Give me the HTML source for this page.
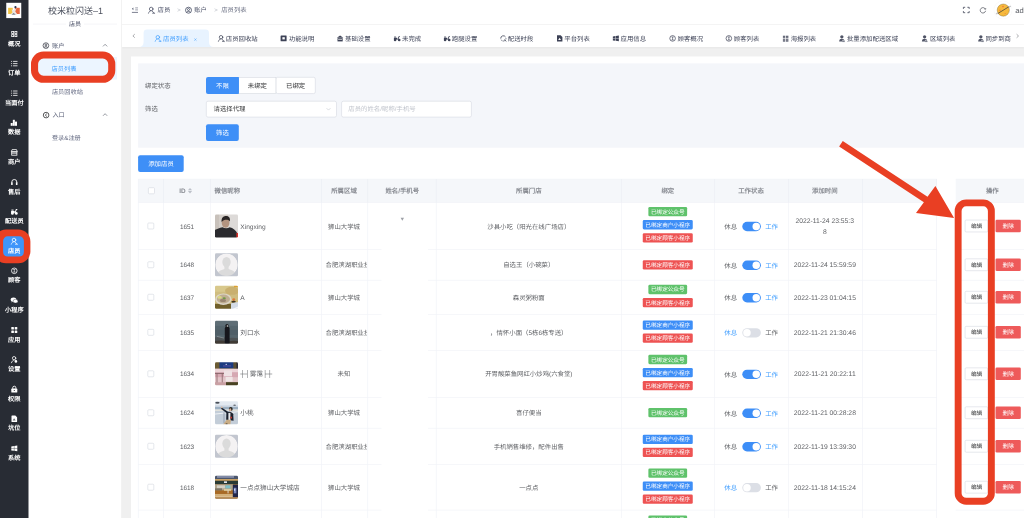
<!DOCTYPE html>
<html lang="zh-CN"><head><meta charset="utf-8"><title>店员列表</title>
<style>
html,body{margin:0;padding:0;}
body{width:1024px;height:518px;overflow:hidden;position:relative;background:#fff;font-family:"Liberation Sans", sans-serif;text-rendering:geometricPrecision;}
.a{position:absolute;}
.t{white-space:nowrap;}
svg{overflow:visible;}
</style></head><body><div id="root" style="position:absolute;left:0;top:0;width:1024px;height:518px;will-change:transform;">
<svg class="a" style="left:121px;top:46px" width="904" height="473"><rect x="1" y="1" width="902.000" height="471.000" fill="#f0f0f0"/></svg>
<svg class="a" style="left:130px;top:55px" width="895" height="465"><rect x="1.0" y="1.5" width="893.000" height="462.000" fill="#fff"/></svg>
<svg class="a" style="left:137px;top:62px" width="889" height="87"><rect x="1.1" y="1.4" width="886.000" height="84.300" fill="#f4f6fa"/></svg>
<div class="a" style="left:122px;top:0px;width:902px;height:25px;background:#fff;border-bottom:1px solid #f4f4f4;box-sizing:border-box;"></div>
<div class="a" style="left:122px;top:25px;width:902px;height:22px;background:#fff;box-shadow:0 1px 2px rgba(0,0,0,0.04);"></div>
<svg class="a" style="left:130px;top:6px;" width="11" height="10"><g transform="translate(1.9 1.2)"><g stroke="#5a6074" fill="none"><path d="M3.3 0.7H6.1M3.3 2.7H6.1" stroke-width="0.6"/><path d="M0 5.2H6.1" stroke-width="0.8"/></g><path d="M1.5 0.2V3L0 1.6Z" fill="#5a6074"/></g></svg>
<svg class="a" style="left:147px;top:5px;" width="10" height="11"><g transform="translate(1 1.7) scale(1.0000 1.0000)"><g stroke="#454b62" stroke-width="0.75" fill="none" stroke-linecap="round"><circle cx="3.2" cy="2.3" r="1.8"/><path d="M0.5 6.5C0.9 5 1.8 4.3 2.6 4.1"/><path d="M3.9 4.1L6.2 6.4"/><path d="M4.6 6.5H6.5"/></g></g></svg>
<div class="a t" style="left:157.5px;top:6px;font-size:6.4px;line-height:10px;color:#454b62;">店员</div>
<div class="a t" style="left:177.2px;top:6px;font-size:6px;line-height:10px;color:#b4b8c0;">&gt;</div>
<svg class="a" style="left:184px;top:5px;" width="10" height="11"><g transform="translate(1 1.7) scale(1.0000 1.0000)"><g stroke="#454b62" stroke-width="0.8" fill="none"><circle cx="3.5" cy="3.5" r="3"/><circle cx="3.5" cy="2.8" r="1"/><path d="M1.6 5.6C2 4.4 5 4.4 5.4 5.6"/></g></g></svg>
<div class="a t" style="left:194.2px;top:6px;font-size:6.4px;line-height:10px;color:#454b62;">账户</div>
<div class="a t" style="left:214.2px;top:6px;font-size:6px;line-height:10px;color:#b4b8c0;">&gt;</div>
<div class="a t" style="left:221.2px;top:6px;font-size:6.4px;line-height:10px;color:#6a6f82;">店员列表</div>
<svg class="a" style="left:962px;top:5px;" width="10" height="11"><g transform="translate(1 1.9)"><g stroke="#3d4256" stroke-width="0.8" fill="none"><path d="M0.4 2V0.4H2.2M4.4 0.4H6.2V2M6.2 4.2V5.8H4.4M2.2 5.8H0.4V4.2"/></g></g></svg>
<svg class="a" style="left:978px;top:6px;" width="10" height="10"><g transform="translate(1.8 1.0)"><g stroke="#4a4d58" stroke-width="0.7" fill="none"><path d="M5.6 2.2A2.7 2.7 0 1 0 5.8 3.8"/><path d="M4.5 2.1L5.8 2.3L6 1" stroke-width="0.55"/></g></g></svg>
<div class="a" style="left:994.4px;top:1.3px;width:17.5px;height:17.5px;background:#fff;border-radius:9px;box-shadow:0 0 1px rgba(0,0,0,0.08);"></div>
<svg class="a" style="left:994px;top:1px;" width="20" height="19"><g transform="translate(1.4 1.5)"><circle cx="7.9" cy="7.6" r="6.1" fill="#f6b93c" stroke="#6e5a28" stroke-width="0.35"/><circle cx="7.6" cy="4.1" r="0.8" fill="#f0743a"/><circle cx="4.6" cy="7.8" r="0.7" fill="#f0743a"/><circle cx="9.8" cy="11" r="0.6" fill="#f0843a"/><path d="M2.6 10.9L13.4 4.3" stroke="#4a4436" stroke-width="0.8" fill="none"/><path d="M2.6 10.9C0.6 12.2 0.4 11.2 1.8 10" stroke="#8a8c92" stroke-width="0.5" fill="none"/><path d="M13.4 4.3C15.4 3 15.6 3.8 14.2 5" stroke="#8a8c92" stroke-width="0.5" fill="none"/></g></svg>
<div class="a t" style="left:1015.2px;top:6px;font-size:7.6px;line-height:10px;color:#55585f;">adm</div>
<svg class="a" style="left:131px;top:32px;" width="7" height="8"><g transform="translate(1.4 1.8)"><path d="M2.4 0.3L0.5 2.1L2.4 3.9" stroke="#73767a" stroke-width="0.6" fill="none"/></g></svg>
<svg class="a" style="left:138px;top:28px;" width="78" height="22"><g transform="translate(1 1.5)"><path d="M0 17.6 C2.6 17.6 4.6 16 4.6 12.6 V3.4 C4.6 1.2 5.8 0 8 0 H66.6 C68.8 0 70 1.2 70 3.4 V12.6 C70 16 72 17.6 74.6 17.6 Z" fill="#e8f3ff"/></g></svg>
<svg class="a" style="left:153px;top:34px;" width="11" height="10"><g transform="translate(1.7 1.0) scale(0.9714 0.9714)"><g stroke="#409eff" stroke-width="0.75" fill="none" stroke-linecap="round"><circle cx="3.2" cy="2.3" r="1.8"/><path d="M0.5 6.5C0.9 5 1.8 4.3 2.6 4.1"/><path d="M3.9 4.1L6.2 6.4"/><path d="M4.6 6.5H6.5"/></g></g></svg>
<div class="a t" style="left:163.0px;top:35px;font-size:6.4px;line-height:10px;color:#409eff;">店员列表</div>
<svg class="a" style="left:216px;top:34px;" width="11" height="10"><g transform="translate(1.95 1.0) scale(0.9714 0.9714)"><g stroke="#3d4256" stroke-width="0.75" fill="none" stroke-linecap="round"><circle cx="3.2" cy="2.3" r="1.8"/><path d="M0.5 6.5C0.9 5 1.8 4.3 2.6 4.1"/><path d="M3.9 4.1L6.2 6.4"/><path d="M4.6 6.5H6.5"/></g></g></svg>
<div class="a t" style="left:225.75px;top:35px;font-size:6.4px;line-height:10px;color:#3d4256;">店员回收站</div>
<svg class="a" style="left:279px;top:34px;" width="10" height="10"><g transform="translate(1.6 1.6)"><rect x="0" y="0" width="6" height="5.6" rx="0.5" fill="#3d4256"/><rect x="1.8" y="1.6" width="2.4" height="2.2" fill="#fff"/></g></svg>
<div class="a t" style="left:288.75px;top:35px;font-size:6.4px;line-height:10px;color:#3d4256;">功能说明</div>
<svg class="a" style="left:335px;top:34px;" width="11" height="10"><g transform="translate(1.9 1.4)"><path d="M3.2 0L6.4 2.4H0Z" fill="#3d4256"/><rect x="0.6" y="2.8" width="5.2" height="3.2" fill="#3d4256"/><rect x="1.2" y="3.6" width="4" height="0.6" fill="#fff"/></g></svg>
<div class="a t" style="left:345.0px;top:35px;font-size:6.4px;line-height:10px;color:#3d4256;">基础设置</div>
<svg class="a" style="left:392px;top:34px;" width="11" height="10"><g transform="translate(1.7 1.4)"><g fill="#3d4256"><circle cx="1.4" cy="4.6" r="1.3"/><circle cx="5.5" cy="4.6" r="1.3"/><rect x="0.2" y="2.4" width="3.4" height="1.8"/><path d="M3.6 4.4L5 0.8H6.2V1.6H5.6L4.6 4.4Z"/><rect x="0.4" y="1.2" width="2" height="0.9"/></g></g></svg>
<div class="a t" style="left:402.0px;top:35px;font-size:6.4px;line-height:10px;color:#3d4256;">未完成</div>
<svg class="a" style="left:442px;top:34px;" width="11" height="10"><g transform="translate(1.7 1.4)"><g fill="#3d4256"><circle cx="1.4" cy="4.6" r="1.3"/><circle cx="5.5" cy="4.6" r="1.3"/><rect x="0.2" y="2.4" width="3.4" height="1.8"/><path d="M3.6 4.4L5 0.8H6.2V1.6H5.6L4.6 4.4Z"/><rect x="0.4" y="1.2" width="2" height="0.9"/></g></g></svg>
<div class="a t" style="left:451.75px;top:35px;font-size:6.4px;line-height:10px;color:#3d4256;">跑腿设置</div>
<svg class="a" style="left:498px;top:34px;" width="11" height="10"><g transform="translate(1.95 1.2)"><g stroke="#3d4256" stroke-width="0.8" fill="none"><path d="M0.8 3.4A2.6 2.6 0 0 1 5.6 1.8"/><path d="M6 3A2.6 2.6 0 0 1 1.2 4.6" stroke-dasharray="1.2 0.6"/><path d="M4.4 4.4L6.4 6.2"/></g></g></svg>
<div class="a t" style="left:507.75px;top:35px;font-size:6.4px;line-height:10px;color:#3d4256;">配送时段</div>
<svg class="a" style="left:556px;top:34px;" width="9" height="10"><g transform="translate(1.0 1.2)"><path d="M0 0H3.6L5.4 1.8V6.4H0Z" fill="#3d4256"/><path d="M1.2 4.8L2.6 2.6L4 4.8Z" fill="#fff"/></g></svg>
<div class="a t" style="left:564.25px;top:35px;font-size:6.4px;line-height:10px;color:#3d4256;">平台列表</div>
<svg class="a" style="left:611px;top:34px;" width="10" height="10"><g transform="translate(1.85 1.6)"><g fill="#3d4256"><path d="M0 0.8L2.6 0.4V2.6H0Z"/><path d="M3 0.35L6 0V2.6H3Z"/><path d="M0 3H2.6V5.2L0 4.8Z"/><path d="M3 3H6V5.6L3 5.25Z"/></g></g></svg>
<div class="a t" style="left:620.5px;top:35px;font-size:6.4px;line-height:10px;color:#3d4256;">应用信息</div>
<svg class="a" style="left:668px;top:34px;" width="10" height="10"><g transform="translate(1.4 1.2)"><g stroke="#3d4256" stroke-width="0.7" fill="none"><circle cx="3.2" cy="3.2" r="2.8"/><path d="M2.2 1.8H4.2M3.2 1.8V4.6M2.2 4.6H4.2" stroke-width="0.6"/></g></g></svg>
<div class="a t" style="left:677.5px;top:35px;font-size:6.4px;line-height:10px;color:#3d4256;">顾客概况</div>
<svg class="a" style="left:724px;top:34px;" width="11" height="10"><g transform="translate(1.65 1.2)"><g stroke="#3d4256" stroke-width="0.7" fill="none"><circle cx="3.2" cy="3.2" r="2.8"/><path d="M2.2 1.8H4.2M3.2 1.8V4.6M2.2 4.6H4.2" stroke-width="0.6"/></g></g></svg>
<div class="a t" style="left:733.75px;top:35px;font-size:6.4px;line-height:10px;color:#3d4256;">顾客列表</div>
<svg class="a" style="left:781px;top:34px;" width="10" height="10"><g transform="translate(1.9 1.7)"><g fill="#3d4256" opacity="0.78"><rect x="0" y="0" width="2.4" height="2.2"/><rect x="3.1" y="0" width="2.4" height="2.2"/><rect x="0" y="2.9" width="2.4" height="3.1"/><rect x="3.1" y="2.9" width="2.4" height="3.1"/></g><path d="M0 4.3H5.6" stroke="#fff" stroke-width="0.35" opacity="0.7"/></g></svg>
<div class="a t" style="left:790.7px;top:35px;font-size:6.4px;line-height:10px;color:#3d4256;">海报列表</div>
<svg class="a" style="left:838px;top:34px;" width="9" height="10"><g transform="translate(1.15 1.1)"><g fill="#3d4256" opacity="0.9"><circle cx="2.7" cy="1.7" r="1.65"/><path d="M0 6.4C0 4.3 1.2 3.7 2.7 3.7S5.4 4.3 5.4 6.4Z"/></g><path d="M3.9 4.6V6.6M2.9 5.6H4.9" stroke="#fff" stroke-width="0.45"/><path d="M3.2 6.5H5.6" stroke="#3d4256" stroke-width="0.5"/></g></svg>
<div class="a t" style="left:846.95px;top:35px;font-size:6.4px;line-height:10px;color:#3d4256;">批量添加配送区域</div>
<svg class="a" style="left:920px;top:34px;" width="10" height="10"><g transform="translate(1.9 1.1)"><g fill="#3d4256" opacity="0.9"><circle cx="2.7" cy="1.7" r="1.65"/><path d="M0 6.4C0 4.3 1.2 3.7 2.7 3.7S5.4 4.3 5.4 6.4Z"/></g><path d="M3.9 4.6V6.6M2.9 5.6H4.9" stroke="#fff" stroke-width="0.45"/><path d="M3.2 6.5H5.6" stroke="#3d4256" stroke-width="0.5"/></g></svg>
<div class="a t" style="left:929.95px;top:35px;font-size:6.4px;line-height:10px;color:#3d4256;">区域列表</div>
<svg class="a" style="left:977px;top:34px;" width="9" height="10"><g transform="translate(1.15 1.1)"><g fill="#3d4256" opacity="0.9"><circle cx="2.7" cy="1.7" r="1.65"/><path d="M0 6.4C0 4.3 1.2 3.7 2.7 3.7S5.4 4.3 5.4 6.4Z"/></g><path d="M3.9 4.6V6.6M2.9 5.6H4.9" stroke="#fff" stroke-width="0.45"/><path d="M3.2 6.5H5.6" stroke="#3d4256" stroke-width="0.5"/></g></svg>
<div class="a t" style="left:985.45px;top:35px;font-size:6.4px;line-height:10px;color:#3d4256;width:27.6px;overflow:hidden;white-space:nowrap;">同步到商</div>
<svg class="a" style="left:192px;top:37px;" width="7" height="7"><g transform="translate(1.9 1.1)"><path d="M0.4 0.4L2.6 2.6M2.6 0.4L0.4 2.6" stroke="#409eff" stroke-width="0.5" fill="none"/></g></svg>
<svg class="a" style="left:1011px;top:25px" width="15" height="22"><rect x="1.2" y="1" width="12.000" height="20.000" fill="#fff"/></svg>
<svg class="a" style="left:1015px;top:32px;" width="6" height="9"><g transform="translate(1.2 1.9)"><path d="M0.4 0.3L2.3 2.1L0.4 3.9" stroke="#73767a" stroke-width="0.6" fill="none"/></g></svg>
<div class="a t" style="left:145px;top:82px;font-size:6.4px;line-height:10px;color:#606266;">绑定状态</div>
<svg class="a" style="left:274px;top:76px" width="43" height="19"><rect x="1.900" y="1.300" width="39.400" height="16.300" fill="#fff" stroke="#d5d9e0" stroke-width="0.6" rx="1.700"/></svg>
<div class="a t" style="left:275.6px;width:40px;text-align:center;top:82px;font-size:6.4px;line-height:10px;color:#303133;">已绑定</div>
<svg class="a" style="left:237px;top:76px" width="41" height="19"><rect x="1.500" y="1.300" width="37.400" height="16.300" fill="#fff" stroke="#d5d9e0" stroke-width="0.6"/></svg>
<div class="a t" style="left:237.39999999999998px;width:40px;text-align:center;top:82px;font-size:6.4px;line-height:10px;color:#303133;">未绑定</div>
<svg class="a" style="left:205px;top:76px" width="35" height="19"><rect x="1" y="1" width="32.800" height="16.900" fill="#3e8ff7" rx="2"/></svg>
<svg class="a" style="left:229px;top:76px" width="11" height="19"><rect x="1" y="1" width="8.800" height="16.900" fill="#3e8ff7"/></svg>
<div class="a t" style="left:202.4px;width:40px;text-align:center;top:82px;font-size:6.4px;line-height:10px;color:#fff;">不限</div>
<div class="a t" style="left:145px;top:105px;font-size:6.4px;line-height:10px;color:#606266;">筛选</div>
<svg class="a" style="left:205px;top:99px" width="133" height="20"><rect x="1.300" y="2.200" width="130.200" height="15.900" fill="#fff" stroke="#d5d9e0" stroke-width="0.6" rx="1.700"/></svg>
<div class="a t" style="left:213.5px;top:105px;font-size:6.4px;line-height:10px;color:#303133;">请选择代理</div>
<svg class="a" style="left:325px;top:106px;" width="8" height="7"><g transform="translate(1.0 1.6)"><path d="M0.6 0.6L2.5 2.5L4.4 0.6" stroke="#c0c4cc" stroke-width="0.6" fill="none"/></g></svg>
<svg class="a" style="left:340px;top:99px" width="133" height="20"><rect x="1.600" y="2.200" width="129.800" height="15.900" fill="#fff" stroke="#d5d9e0" stroke-width="0.6" rx="1.700"/></svg>
<div class="a t" style="left:348.3px;top:105px;font-size:6.4px;line-height:10px;color:#c0c4cc;">店员的姓名/昵称/手机号</div>
<svg class="a" style="left:205px;top:123px" width="35" height="19"><rect x="1" y="1.2" width="32.800" height="16.800" fill="#3e8ff7" rx="2"/></svg>
<div class="a t" style="left:202.4px;width:40px;text-align:center;top:129px;font-size:6.4px;line-height:10px;color:#fff;">筛选</div>
<svg class="a" style="left:137px;top:154px" width="48" height="19"><rect x="1.1" y="1.2" width="45.600" height="16.800" fill="#3e8ff7" rx="2"/></svg>
<div class="a t" style="left:136.0px;width:50px;text-align:center;top:160px;font-size:6.4px;line-height:10px;color:#fff;">添加店员</div>
<svg class="a" style="left:137px;top:178px" width="888" height="26"><rect x="1.1" y="1.2" width="885.900" height="23.500" fill="#f5f7fa"/></svg>
<svg class="a" style="left:137px;top:177px" width="888" height="4"><rect x="1.1" y="1.8" width="885.900" height="0.700" fill="#f1f3f8"/></svg>
<svg class="a" style="left:136px;top:178px" width="4" height="342"><rect x="1.9" y="1" width="0.700" height="340.000" fill="#f1f3f8"/></svg>
<svg class="a" style="left:137px;top:201px" width="888" height="4"><rect x="1.1" y="1.35" width="885.900" height="0.700" fill="#f1f3f8"/></svg>
<svg class="a" style="left:137px;top:247px" width="888" height="4"><rect x="1.1" y="1.95" width="885.900" height="0.700" fill="#f1f3f8"/></svg>
<svg class="a" style="left:137px;top:278px" width="888" height="4"><rect x="1.1" y="1.85" width="885.900" height="0.700" fill="#f1f3f8"/></svg>
<svg class="a" style="left:137px;top:312px" width="888" height="4"><rect x="1.1" y="1.95" width="885.900" height="0.700" fill="#f1f3f8"/></svg>
<svg class="a" style="left:137px;top:348px" width="888" height="4"><rect x="1.1" y="1.95" width="885.900" height="0.700" fill="#f1f3f8"/></svg>
<svg class="a" style="left:137px;top:395px" width="888" height="4"><rect x="1.1" y="1.95" width="885.900" height="0.700" fill="#f1f3f8"/></svg>
<svg class="a" style="left:137px;top:426px" width="888" height="4"><rect x="1.1" y="1.85" width="885.900" height="0.700" fill="#f1f3f8"/></svg>
<svg class="a" style="left:137px;top:462px" width="888" height="4"><rect x="1.1" y="1.95" width="885.900" height="0.700" fill="#f1f3f8"/></svg>
<svg class="a" style="left:137px;top:508px" width="888" height="4"><rect x="1.1" y="1.75" width="885.900" height="0.700" fill="#f1f3f8"/></svg>
<svg class="a" style="left:162px;top:178px" width="3" height="26"><rect x="1.25" y="1" width="0.700" height="23.700" fill="#ebeef4"/></svg>
<svg class="a" style="left:162px;top:201px" width="3" height="319"><rect x="1.25" y="1.7" width="0.700" height="316.000" fill="#f1f3f8"/></svg>
<svg class="a" style="left:208px;top:178px" width="4" height="26"><rect x="1.95" y="1" width="0.700" height="23.700" fill="#ebeef4"/></svg>
<svg class="a" style="left:208px;top:201px" width="4" height="319"><rect x="1.95" y="1.7" width="0.700" height="316.000" fill="#f1f3f8"/></svg>
<svg class="a" style="left:320px;top:178px" width="3" height="26"><rect x="1.25" y="1" width="0.700" height="23.700" fill="#ebeef4"/></svg>
<svg class="a" style="left:320px;top:201px" width="3" height="319"><rect x="1.25" y="1.7" width="0.700" height="316.000" fill="#f1f3f8"/></svg>
<svg class="a" style="left:366px;top:178px" width="4" height="26"><rect x="1.4" y="1" width="0.700" height="23.700" fill="#ebeef4"/></svg>
<svg class="a" style="left:366px;top:201px" width="4" height="319"><rect x="1.4" y="1.7" width="0.700" height="316.000" fill="#f1f3f8"/></svg>
<svg class="a" style="left:434px;top:178px" width="4" height="26"><rect x="1.85" y="1" width="0.700" height="23.700" fill="#ebeef4"/></svg>
<svg class="a" style="left:434px;top:201px" width="4" height="319"><rect x="1.85" y="1.7" width="0.700" height="316.000" fill="#f1f3f8"/></svg>
<svg class="a" style="left:619px;top:178px" width="4" height="26"><rect x="1.95" y="1" width="0.700" height="23.700" fill="#ebeef4"/></svg>
<svg class="a" style="left:619px;top:201px" width="4" height="319"><rect x="1.95" y="1.7" width="0.700" height="316.000" fill="#f1f3f8"/></svg>
<svg class="a" style="left:713px;top:178px" width="4" height="26"><rect x="1.35" y="1" width="0.700" height="23.700" fill="#ebeef4"/></svg>
<svg class="a" style="left:713px;top:201px" width="4" height="319"><rect x="1.35" y="1.7" width="0.700" height="316.000" fill="#f1f3f8"/></svg>
<svg class="a" style="left:787px;top:178px" width="4" height="26"><rect x="1.35" y="1" width="0.700" height="23.700" fill="#ebeef4"/></svg>
<svg class="a" style="left:787px;top:201px" width="4" height="319"><rect x="1.35" y="1.7" width="0.700" height="316.000" fill="#f1f3f8"/></svg>
<svg class="a" style="left:861px;top:178px" width="3" height="26"><rect x="1.25" y="1" width="0.700" height="23.700" fill="#ebeef4"/></svg>
<svg class="a" style="left:861px;top:201px" width="3" height="319"><rect x="1.25" y="1.7" width="0.700" height="316.000" fill="#f1f3f8"/></svg>
<svg class="a" style="left:935px;top:178px" width="3" height="26"><rect x="1.25" y="1" width="0.700" height="23.700" fill="#ebeef4"/></svg>
<svg class="a" style="left:935px;top:201px" width="3" height="319"><rect x="1.25" y="1.7" width="0.700" height="316.000" fill="#f1f3f8"/></svg>
<svg class="a" style="left:380px;top:202px" width="49" height="319"><rect x="1.5" y="1.2" width="46.500" height="316.000" fill="#fff"/></svg>
<svg class="a" style="left:936px;top:177px" width="21" height="343"><rect x="1" y="1" width="18.700" height="341.000" fill="#fff"/></svg>
<svg class="a" style="left:147px;top:186px" width="9" height="10"><rect x="1.400" y="1.700" width="6.100" height="6.100" fill="#fff" stroke="#d3d7df" stroke-width="0.6" rx="0.900"/></svg>
<div class="a t" style="left:179.2px;top:187px;font-size:6.4px;line-height:10px;color:#888b92;font-weight:700;">ID</div>
<svg class="a" style="left:186px;top:187px;" width="9" height="9"><g transform="translate(1.7 1.0)"><path d="M2.3 0L4.4 2.3H0.2Z" fill="#bcc0c8"/><path d="M2.3 5.4L4.4 3.1H0.2Z" fill="#bcc0c8"/></g></svg>
<div class="a t" style="left:214.5px;top:187px;font-size:6.4px;line-height:10px;color:#888b92;font-weight:700;">微信昵称</div>
<div class="a t" style="left:244.0px;width:200px;text-align:center;top:187px;font-size:6.4px;line-height:10px;color:#888b92;font-weight:700;">所属区域</div>
<div class="a t" style="left:302.3px;width:200px;text-align:center;top:187px;font-size:6.4px;line-height:10px;color:#888b92;font-weight:700;">姓名/手机号</div>
<div class="a t" style="left:428.79999999999995px;width:200px;text-align:center;top:187px;font-size:6.4px;line-height:10px;color:#888b92;font-weight:700;">所属门店</div>
<div class="a t" style="left:567.8px;width:200px;text-align:center;top:187px;font-size:6.4px;line-height:10px;color:#888b92;font-weight:700;">绑定</div>
<div class="a t" style="left:651.0px;width:200px;text-align:center;top:187px;font-size:6.4px;line-height:10px;color:#888b92;font-weight:700;">工作状态</div>
<div class="a t" style="left:724.8px;width:200px;text-align:center;top:187px;font-size:6.4px;line-height:10px;color:#888b92;font-weight:700;">添加时间</div>
<div class="a t" style="left:892.3px;width:200px;text-align:center;top:187px;font-size:6.4px;line-height:10px;color:#888b92;font-weight:700;">操作</div>
<svg class="a" style="left:146px;top:221px" width="10" height="10"><rect x="1.800" y="2.000" width="6.000" height="6.000" fill="#fff" stroke="#d3d7df" stroke-width="0.6" rx="0.900"/></svg>
<div class="a t" style="left:167.0px;width:40px;text-align:center;top:223px;font-size:6.4px;line-height:10px;color:#606266;">1651</div>
<svg class="a" style="left:214px;top:213px;" width="26" height="27"><g transform="translate(1.0 1.55)"><defs><clipPath id="ac1"><rect width="23" height="23" rx="1.3"/></clipPath><filter id="af1" x="-10%" y="-10%" width="120%" height="120%"><feGaussianBlur stdDeviation="0.45"/></filter></defs><g clip-path="url(#ac1)"><g filter="url(#af1)"><rect x="-2" y="-2" width="27" height="27" fill="#d3cdc8"/><rect x="13" y="-2" width="12" height="27" fill="#dddad8"/><rect x="-2" y="-2" width="6" height="27" fill="#c8c1bb"/><path d="M-2 25V16.5C1 14.6 4.6 13.2 7.6 12.6C9.6 14 12.6 14 14.6 12.8C18 13.6 21 15.6 22.4 19V25Z" fill="#2b2c2e"/><ellipse cx="10.6" cy="8.2" rx="3.9" ry="5" fill="#b39480"/><path d="M6.6 7.4C6.2 3.4 8.2 1.4 11 1.4S15.4 3 15 7C13.8 4.8 9 4.6 6.6 7.4Z" fill="#2a2725"/><rect x="21.4" y="18.4" width="2.6" height="5.6" fill="#d52f2a"/></g></g></g></svg>
<div class="a t" style="left:240.3px;top:223px;font-size:6.6px;line-height:10px;color:#606266;">Xingxing</div>
<div class="a t" style="left:244.0px;width:200px;text-align:center;top:223px;font-size:6.4px;line-height:10px;color:#606266;">狮山大学城</div>
<div class="a t" style="left:438.79999999999995px;width:180px;text-align:center;top:223px;font-size:6.4px;line-height:10px;color:#606266;">沙县小吃（阳光在线广场店）</div>
<svg class="a" style="left:647px;top:206px" width="42" height="12"><rect x="1.375" y="1.05" width="38.750" height="9.300" fill="#5fc26b" rx="1.3"/></svg>
<div class="a t" style="left:637.75px;width:60px;text-align:center;top:208px;font-size:5.6px;line-height:10px;color:#fff;">已绑定公众号</div>
<svg class="a" style="left:641px;top:219px" width="53" height="12"><rect x="1.75" y="1.1" width="50.000" height="9.300" fill="#3d8ef7" rx="1.3"/></svg>
<div class="a t" style="left:637.75px;width:60px;text-align:center;top:221px;font-size:5.6px;line-height:10px;color:#fff;">已绑定商户小程序</div>
<svg class="a" style="left:641px;top:232px" width="53" height="12"><rect x="1.75" y="1.15" width="50.000" height="9.300" fill="#ee5353" rx="1.3"/></svg>
<div class="a t" style="left:637.75px;width:60px;text-align:center;top:234px;font-size:5.6px;line-height:10px;color:#fff;">已绑定顾客小程序</div>
<div class="a t" style="left:724.3px;top:223px;font-size:6.4px;line-height:10px;color:#606266;">休息</div>
<svg class="a" style="left:741px;top:220px" width="21" height="13"><rect x="1.3" y="1.85" width="18.600" height="9.300" fill="#3d8ef7" rx="4.7"/></svg>
<svg class="a" style="left:751px;top:221px" width="10" height="11"><rect x="1.5" y="1.75" width="7.500" height="7.500" fill="#fff" rx="4"/></svg>
<div class="a t" style="left:765.2px;top:223px;font-size:6.4px;line-height:10px;color:#409eff;">工作</div>
<div class="a t" style="left:784.8px;width:80px;text-align:center;top:217px;font-size:6.75px;line-height:10px;color:#606266;">2022-11-24 23:55:3</div>
<div class="a t" style="left:784.8px;width:80px;text-align:center;top:228px;font-size:6.75px;line-height:10px;color:#606266;">8</div>
<svg class="a" style="left:963px;top:218px" width="27" height="16"><rect x="2.100" y="2.050" width="22.700" height="11.900" fill="#fff" stroke="#d5d9e0" stroke-width="0.6" rx="1.000"/></svg>
<div class="a t" style="left:961.5px;width:30px;text-align:center;top:222px;font-size:5.6px;line-height:10px;color:#303133;">编辑</div>
<svg class="a" style="left:994px;top:218px" width="28" height="16"><rect x="1.5" y="1.75" width="25.300" height="12.500" fill="#ee5a5a" rx="1.3"/></svg>
<div class="a t" style="left:993.2px;width:30px;text-align:center;top:222px;font-size:5.6px;line-height:10px;color:#fff;">删除</div>
<svg class="a" style="left:146px;top:260px" width="10" height="10"><rect x="1.800" y="1.750" width="6.000" height="6.000" fill="#fff" stroke="#d3d7df" stroke-width="0.6" rx="0.900"/></svg>
<div class="a t" style="left:167.0px;width:40px;text-align:center;top:261px;font-size:6.4px;line-height:10px;color:#606266;">1648</div>
<svg class="a" style="left:214px;top:252px;" width="26" height="27"><g transform="translate(1.0 1.3)"><defs><clipPath id="ac2"><rect width="23" height="23" rx="1.3"/></clipPath><filter id="af2" x="-10%" y="-10%" width="120%" height="120%"><feGaussianBlur stdDeviation="0.45"/></filter></defs><g clip-path="url(#ac2)"><g filter="url(#af2)"><rect x="-2" y="-2" width="27" height="27" fill="#c2c6cf"/><circle cx="11.5" cy="11.5" r="11.3" fill="#f4f2f3"/><ellipse cx="11.5" cy="8.8" rx="4.2" ry="5.2" fill="#dbdbdb"/><path d="M1.6 24C1.6 17.4 6 16.8 9.4 15.6V12H13.6V15.6C17 16.8 21.4 17.4 21.4 24Z" fill="#dbdbdb"/><path d="M-2 -2H25V25H-2Z M11.5 0.2A11.3 11.3 0 1 0 11.5 22.8A11.3 11.3 0 1 0 11.5 0.2Z" fill="#c2c6cf" fill-rule="evenodd"/></g></g></g></svg>
<div class="a t" style="left:325.6px;top:261px;font-size:6.4px;line-height:10px;color:#606266;width:41.6px;overflow:hidden;white-space:nowrap;">合肥滨湖职业技</div>
<div class="a t" style="left:438.79999999999995px;width:180px;text-align:center;top:261px;font-size:6.4px;line-height:10px;color:#606266;">自选王（小碗菜）</div>
<svg class="a" style="left:641px;top:259px" width="53" height="12"><rect x="1.75" y="1.25" width="50.000" height="9.300" fill="#ee5353" rx="1.3"/></svg>
<div class="a t" style="left:637.75px;width:60px;text-align:center;top:261px;font-size:5.6px;line-height:10px;color:#fff;">已绑定顾客小程序</div>
<div class="a t" style="left:724.3px;top:262px;font-size:6.4px;line-height:10px;color:#606266;">休息</div>
<svg class="a" style="left:741px;top:259px" width="21" height="12"><rect x="1.3" y="1.6" width="18.600" height="9.300" fill="#3d8ef7" rx="4.7"/></svg>
<svg class="a" style="left:751px;top:260px" width="10" height="10"><rect x="1.5" y="1.5" width="7.500" height="7.500" fill="#fff" rx="4"/></svg>
<div class="a t" style="left:765.2px;top:262px;font-size:6.4px;line-height:10px;color:#409eff;">工作</div>
<div class="a t" style="left:784.8px;width:80px;text-align:center;top:261px;font-size:6.75px;line-height:10px;color:#606266;">2022-11-24 15:59:59</div>
<svg class="a" style="left:963px;top:257px" width="27" height="15"><rect x="2.100" y="1.800" width="22.700" height="11.900" fill="#fff" stroke="#d5d9e0" stroke-width="0.6" rx="1.000"/></svg>
<div class="a t" style="left:961.5px;width:30px;text-align:center;top:261px;font-size:5.6px;line-height:10px;color:#303133;">编辑</div>
<svg class="a" style="left:994px;top:257px" width="28" height="15"><rect x="1.5" y="1.5" width="25.300" height="12.500" fill="#ee5a5a" rx="1.3"/></svg>
<div class="a t" style="left:993.2px;width:30px;text-align:center;top:261px;font-size:5.6px;line-height:10px;color:#fff;">删除</div>
<svg class="a" style="left:146px;top:292px" width="10" height="10"><rect x="1.800" y="2.250" width="6.000" height="6.000" fill="#fff" stroke="#d3d7df" stroke-width="0.6" rx="0.900"/></svg>
<div class="a t" style="left:167.0px;width:40px;text-align:center;top:294px;font-size:6.4px;line-height:10px;color:#606266;">1637</div>
<svg class="a" style="left:214px;top:284px;" width="26" height="27"><g transform="translate(1.0 1.8)"><defs><clipPath id="ac3"><rect width="23" height="23" rx="1.3"/></clipPath><filter id="af3" x="-10%" y="-10%" width="120%" height="120%"><feGaussianBlur stdDeviation="0.45"/></filter></defs><g clip-path="url(#ac3)"><g filter="url(#af3)"><rect x="-2" y="-2" width="27" height="27" fill="#cfbd80"/><rect x="-2" y="-2" width="27" height="8" fill="#d8c88c"/><ellipse cx="17" cy="5" rx="7" ry="4" fill="#c9b070"/><rect x="19" y="-2" width="6" height="3.4" fill="#dca032"/><rect x="-2" y="18" width="27" height="7" fill="#6f5e2c"/><ellipse cx="8.4" cy="13.4" rx="8.2" ry="5.8" fill="#ddd6c8"/><ellipse cx="8.4" cy="13.2" rx="6.6" ry="4.4" fill="#bfae92"/><ellipse cx="4.6" cy="11.6" rx="2.2" ry="1.4" fill="#d9d684"/><ellipse cx="9.2" cy="12.4" rx="1.6" ry="1" fill="#6f9a44"/><ellipse cx="8" cy="14.6" rx="3" ry="1.6" fill="#9a8672"/><circle cx="18.8" cy="13.8" r="1.4" fill="#e27a3a"/><ellipse cx="18.6" cy="16" rx="2.2" ry="1" fill="#3c3424"/><path d="M16 25V17.4L25 16V25Z" fill="#d3dbe6"/><path d="M17 23.4L25 19.6V21L18 24.6Z" fill="#f4f6f8"/></g></g></g></svg>
<div class="a t" style="left:240.3px;top:294px;font-size:6.6px;line-height:10px;color:#606266;">A</div>
<div class="a t" style="left:244.0px;width:200px;text-align:center;top:294px;font-size:6.4px;line-height:10px;color:#606266;">狮山大学城</div>
<div class="a t" style="left:438.79999999999995px;width:180px;text-align:center;top:294px;font-size:6.4px;line-height:10px;color:#606266;">森灵粥粉面</div>
<svg class="a" style="left:647px;top:283px" width="42" height="13"><rect x="1.375" y="1.825" width="38.750" height="9.300" fill="#5fc26b" rx="1.3"/></svg>
<div class="a t" style="left:637.75px;width:60px;text-align:center;top:285px;font-size:5.6px;line-height:10px;color:#fff;">已绑定公众号</div>
<svg class="a" style="left:641px;top:296px" width="53" height="13"><rect x="1.75" y="1.875" width="50.000" height="9.300" fill="#ee5353" rx="1.3"/></svg>
<div class="a t" style="left:637.75px;width:60px;text-align:center;top:299px;font-size:5.6px;line-height:10px;color:#fff;">已绑定顾客小程序</div>
<div class="a t" style="left:724.3px;top:294px;font-size:6.4px;line-height:10px;color:#606266;">休息</div>
<svg class="a" style="left:741px;top:292px" width="21" height="12"><rect x="1.3" y="1.1" width="18.600" height="9.300" fill="#3d8ef7" rx="4.7"/></svg>
<svg class="a" style="left:751px;top:293px" width="10" height="10"><rect x="1.5" y="1.0" width="7.500" height="7.500" fill="#fff" rx="4"/></svg>
<div class="a t" style="left:765.2px;top:294px;font-size:6.4px;line-height:10px;color:#409eff;">工作</div>
<div class="a t" style="left:784.8px;width:80px;text-align:center;top:294px;font-size:6.75px;line-height:10px;color:#606266;">2022-11-23 01:04:15</div>
<svg class="a" style="left:963px;top:290px" width="27" height="15"><rect x="2.100" y="1.300" width="22.700" height="11.900" fill="#fff" stroke="#d5d9e0" stroke-width="0.6" rx="1.000"/></svg>
<div class="a t" style="left:961.5px;width:30px;text-align:center;top:293px;font-size:5.6px;line-height:10px;color:#303133;">编辑</div>
<svg class="a" style="left:994px;top:290px" width="28" height="15"><rect x="1.5" y="1.0" width="25.300" height="12.500" fill="#ee5a5a" rx="1.3"/></svg>
<div class="a t" style="left:993.2px;width:30px;text-align:center;top:293px;font-size:5.6px;line-height:10px;color:#fff;">删除</div>
<svg class="a" style="left:146px;top:328px" width="10" height="9"><rect x="1.800" y="1.300" width="6.000" height="6.000" fill="#fff" stroke="#d3d7df" stroke-width="0.6" rx="0.900"/></svg>
<div class="a t" style="left:167.0px;width:40px;text-align:center;top:329px;font-size:6.4px;line-height:10px;color:#606266;">1635</div>
<svg class="a" style="left:214px;top:319px;" width="26" height="27"><g transform="translate(1.0 1.85)"><defs><clipPath id="ac4"><rect width="23" height="23" rx="1.3"/></clipPath><filter id="af4" x="-10%" y="-10%" width="120%" height="120%"><feGaussianBlur stdDeviation="0.45"/></filter></defs><g clip-path="url(#ac4)"><g filter="url(#af4)"><rect x="-2" y="-2" width="27" height="27" fill="#55656d"/><rect x="-2" y="-2" width="27" height="7" fill="#5e6e76"/><rect x="-2" y="9" width="27" height="5" fill="#4f5f68"/><path d="M-2 17C4 15.4 9 16.4 12 17.4C16 16.4 20 16.8 25 17.6V25H-2Z" fill="#4e5356"/><path d="M-2 20.4C4 19 9 20 13 20.6C17 19.6 21 19.8 25 20.4V25H-2Z" fill="#3f3a36"/><path d="M2 15.6L9 17.2" stroke="#9aa4aa" stroke-width="0.6"/><rect x="9.8" y="6" width="4.8" height="17" rx="1.6" fill="#14161a"/><circle cx="12" cy="4.8" r="1.7" fill="#191a1d"/><circle cx="12.4" cy="5.2" r="0.7" fill="#e0dcd8"/></g></g></g></svg>
<div class="a t" style="left:240.3px;top:329px;font-size:6.6px;line-height:10px;color:#606266;">刘口水</div>
<div class="a t" style="left:325.6px;top:329px;font-size:6.4px;line-height:10px;color:#606266;width:41.6px;overflow:hidden;white-space:nowrap;">合肥滨湖职业技</div>
<div class="a t" style="left:438.79999999999995px;width:180px;text-align:center;top:329px;font-size:6.4px;line-height:10px;color:#606266;">，情怀小面（5栋6栋专送）</div>
<svg class="a" style="left:641px;top:319px" width="53" height="12"><rect x="1.75" y="1.475" width="50.000" height="9.300" fill="#3d8ef7" rx="1.3"/></svg>
<div class="a t" style="left:637.75px;width:60px;text-align:center;top:321px;font-size:5.6px;line-height:10px;color:#fff;">已绑定商户小程序</div>
<svg class="a" style="left:641px;top:332px" width="53" height="12"><rect x="1.75" y="1.525" width="50.000" height="9.300" fill="#ee5353" rx="1.3"/></svg>
<div class="a t" style="left:637.75px;width:60px;text-align:center;top:334px;font-size:5.6px;line-height:10px;color:#fff;">已绑定顾客小程序</div>
<div class="a t" style="left:724.3px;top:329px;font-size:6.4px;line-height:10px;color:#409eff;">休息</div>
<svg class="a" style="left:741px;top:327px" width="21" height="12"><rect x="1.3" y="1.15" width="18.600" height="9.300" fill="#dcdfe6" rx="4.7"/></svg>
<svg class="a" style="left:742px;top:328px" width="10" height="10"><rect x="1.2" y="1.05" width="7.500" height="7.500" fill="#fff" rx="4"/></svg>
<div class="a t" style="left:765.2px;top:329px;font-size:6.4px;line-height:10px;color:#606266;">工作</div>
<div class="a t" style="left:784.8px;width:80px;text-align:center;top:329px;font-size:6.75px;line-height:10px;color:#606266;">2022-11-21 21:30:46</div>
<svg class="a" style="left:963px;top:325px" width="27" height="15"><rect x="2.100" y="1.350" width="22.700" height="11.900" fill="#fff" stroke="#d5d9e0" stroke-width="0.6" rx="1.000"/></svg>
<div class="a t" style="left:961.5px;width:30px;text-align:center;top:328px;font-size:5.6px;line-height:10px;color:#303133;">编辑</div>
<svg class="a" style="left:994px;top:325px" width="28" height="15"><rect x="1.5" y="1.05" width="25.300" height="12.500" fill="#ee5a5a" rx="1.3"/></svg>
<div class="a t" style="left:993.2px;width:30px;text-align:center;top:328px;font-size:5.6px;line-height:10px;color:#fff;">删除</div>
<svg class="a" style="left:146px;top:369px" width="10" height="10"><rect x="1.800" y="1.800" width="6.000" height="6.000" fill="#fff" stroke="#d3d7df" stroke-width="0.6" rx="0.900"/></svg>
<div class="a t" style="left:167.0px;width:40px;text-align:center;top:370px;font-size:6.4px;line-height:10px;color:#606266;">1634</div>
<svg class="a" style="left:214px;top:361px;" width="26" height="27"><g transform="translate(1.0 1.35)"><defs><clipPath id="ac5"><rect width="23" height="23" rx="1.3"/></clipPath><filter id="af5" x="-10%" y="-10%" width="120%" height="120%"><feGaussianBlur stdDeviation="0.45"/></filter></defs><g clip-path="url(#ac5)"><g filter="url(#af5)"><rect x="-2" y="-2" width="27" height="27" fill="#dcbcc4"/><rect x="-2" y="-2" width="27" height="8.4" fill="#6a5a30"/><rect x="4.4" y="-2" width="14.2" height="8" fill="#1f3a80"/><rect x="18.6" y="-2" width="3" height="8.4" fill="#5a5032"/><rect x="21.4" y="-2" width="3" height="8.4" fill="#2a2a3a"/><circle cx="11.2" cy="2" r="0.7" fill="#e6eeff"/><rect x="8" y="3" width="8" height="1.2" fill="#4a4a9a"/><rect x="-2" y="6.4" width="27" height="3.6" fill="#ecd4d8"/><rect x="-2" y="10" width="27" height="5" fill="#d6a8b2"/><rect x="9" y="8" width="8" height="6" fill="#efe2e4"/><rect x="-2" y="15" width="27" height="5" fill="#e2c4c8"/><rect x="0" y="10.6" width="9" height="0.8" fill="#7a5a5e"/><rect x="1.6" y="10.6" width="0.8" height="10" fill="#8a6468"/><rect x="6.8" y="10.6" width="0.8" height="10" fill="#8a6468"/><rect x="10.6" y="14.6" width="7" height="4.6" fill="#f0e6e6"/><rect x="-2" y="20" width="13" height="5" fill="#c9a0a4"/><rect x="11" y="19.8" width="14" height="5.2" fill="#4a4222"/></g></g></g></svg>
<div class="a t" style="left:240.3px;top:370px;font-size:6.6px;line-height:10px;color:#606266;">┼┤雾霭├┼</div>
<div class="a t" style="left:244.0px;width:200px;text-align:center;top:370px;font-size:6.4px;line-height:10px;color:#606266;">未知</div>
<div class="a t" style="left:438.79999999999995px;width:180px;text-align:center;top:370px;font-size:6.4px;line-height:10px;color:#606266;">开胃酸菜鱼网红小炒鸡(六食堂)</div>
<svg class="a" style="left:647px;top:353px" width="42" height="13"><rect x="1.375" y="1.85" width="38.750" height="9.300" fill="#5fc26b" rx="1.3"/></svg>
<div class="a t" style="left:637.75px;width:60px;text-align:center;top:356px;font-size:5.6px;line-height:10px;color:#fff;">已绑定公众号</div>
<svg class="a" style="left:641px;top:366px" width="53" height="13"><rect x="1.75" y="1.9" width="50.000" height="9.300" fill="#3d8ef7" rx="1.3"/></svg>
<div class="a t" style="left:637.75px;width:60px;text-align:center;top:369px;font-size:5.6px;line-height:10px;color:#fff;">已绑定商户小程序</div>
<svg class="a" style="left:641px;top:379px" width="53" height="13"><rect x="1.75" y="1.95" width="50.000" height="9.300" fill="#ee5353" rx="1.3"/></svg>
<div class="a t" style="left:637.75px;width:60px;text-align:center;top:382px;font-size:5.6px;line-height:10px;color:#fff;">已绑定顾客小程序</div>
<div class="a t" style="left:724.3px;top:371px;font-size:6.4px;line-height:10px;color:#606266;">休息</div>
<svg class="a" style="left:741px;top:368px" width="21" height="12"><rect x="1.3" y="1.65" width="18.600" height="9.300" fill="#3d8ef7" rx="4.7"/></svg>
<svg class="a" style="left:751px;top:369px" width="10" height="11"><rect x="1.5" y="1.55" width="7.500" height="7.500" fill="#fff" rx="4"/></svg>
<div class="a t" style="left:765.2px;top:371px;font-size:6.4px;line-height:10px;color:#409eff;">工作</div>
<div class="a t" style="left:784.8px;width:80px;text-align:center;top:370px;font-size:6.75px;line-height:10px;color:#606266;">2022-11-21 20:22:11</div>
<svg class="a" style="left:963px;top:366px" width="27" height="16"><rect x="2.100" y="1.850" width="22.700" height="11.900" fill="#fff" stroke="#d5d9e0" stroke-width="0.6" rx="1.000"/></svg>
<div class="a t" style="left:961.5px;width:30px;text-align:center;top:370px;font-size:5.6px;line-height:10px;color:#303133;">编辑</div>
<svg class="a" style="left:994px;top:366px" width="28" height="16"><rect x="1.5" y="1.55" width="25.300" height="12.500" fill="#ee5a5a" rx="1.3"/></svg>
<div class="a t" style="left:993.2px;width:30px;text-align:center;top:370px;font-size:5.6px;line-height:10px;color:#fff;">删除</div>
<svg class="a" style="left:146px;top:408px" width="10" height="10"><rect x="1.800" y="1.750" width="6.000" height="6.000" fill="#fff" stroke="#d3d7df" stroke-width="0.6" rx="0.900"/></svg>
<div class="a t" style="left:167.0px;width:40px;text-align:center;top:409px;font-size:6.4px;line-height:10px;color:#606266;">1624</div>
<svg class="a" style="left:214px;top:400px;" width="26" height="27"><g transform="translate(1.0 1.3)"><defs><clipPath id="ac6"><rect width="23" height="23" rx="1.3"/></clipPath><filter id="af6" x="-10%" y="-10%" width="120%" height="120%"><feGaussianBlur stdDeviation="0.45"/></filter></defs><g clip-path="url(#ac6)"><g filter="url(#af6)"><rect x="-2" y="-2" width="27" height="27" fill="#cdd7e2"/><rect x="-2" y="-2" width="27" height="6" fill="#e3e9f0"/><ellipse cx="2.4" cy="1.4" rx="2.2" ry="1" fill="#4a5058"/><ellipse cx="19.6" cy="4" rx="1.4" ry="0.8" fill="#6a7078"/><rect x="-2" y="5.6" width="27" height="2.6" fill="#9db0c2"/><rect x="-2" y="8.2" width="27" height="1.4" fill="#e8e6dc"/><rect x="-2" y="9.6" width="27" height="16" fill="#c3cdd8"/><path d="M-2 12.4L25 9.6V10.6L-2 13.4Z" fill="#eef1f4"/><path d="M9 11V22" stroke="#8a96a4" stroke-width="0.8"/><path d="M6.6 6.2L13.8 11L12.8 12.6L6 7.4Z" fill="#1d2430"/><circle cx="6.8" cy="6" r="0.9" fill="#d8b49c"/><path d="M11.4 11.4C13 9.6 17.6 10.4 18.2 13L18.6 19.4L11.2 18.4Z" fill="#1b222e"/><circle cx="15.8" cy="7.6" r="1.9" fill="#2c2824"/><ellipse cx="15.2" cy="8.4" rx="1.1" ry="1.5" fill="#d4ae96"/><rect x="13.4" y="11.6" width="2" height="7.4" fill="#e6e8ea"/><rect x="15.4" y="15.4" width="1.6" height="1.8" fill="#c8322c"/><path d="M7 25L11.6 18.4H16L15 25Z" fill="#c9ac84"/><ellipse cx="11.6" cy="22.8" rx="1.2" ry="0.7" fill="#222"/></g></g></g></svg>
<div class="a t" style="left:240.3px;top:409px;font-size:6.6px;line-height:10px;color:#606266;">小桃</div>
<div class="a t" style="left:244.0px;width:200px;text-align:center;top:409px;font-size:6.4px;line-height:10px;color:#606266;">狮山大学城</div>
<div class="a t" style="left:438.79999999999995px;width:180px;text-align:center;top:409px;font-size:6.4px;line-height:10px;color:#606266;">喜仔便当</div>
<svg class="a" style="left:647px;top:406px" width="42" height="13"><rect x="1.375" y="1.95" width="38.750" height="9.300" fill="#5fc26b" rx="1.3"/></svg>
<div class="a t" style="left:637.75px;width:60px;text-align:center;top:409px;font-size:5.6px;line-height:10px;color:#fff;">已绑定公众号</div>
<div class="a t" style="left:724.3px;top:410px;font-size:6.4px;line-height:10px;color:#606266;">休息</div>
<svg class="a" style="left:741px;top:407px" width="21" height="12"><rect x="1.3" y="1.6" width="18.600" height="9.300" fill="#3d8ef7" rx="4.7"/></svg>
<svg class="a" style="left:751px;top:408px" width="10" height="10"><rect x="1.5" y="1.5" width="7.500" height="7.500" fill="#fff" rx="4"/></svg>
<div class="a t" style="left:765.2px;top:410px;font-size:6.4px;line-height:10px;color:#409eff;">工作</div>
<div class="a t" style="left:784.8px;width:80px;text-align:center;top:409px;font-size:6.75px;line-height:10px;color:#606266;">2022-11-21 00:28:28</div>
<svg class="a" style="left:963px;top:405px" width="27" height="15"><rect x="2.100" y="1.800" width="22.700" height="11.900" fill="#fff" stroke="#d5d9e0" stroke-width="0.6" rx="1.000"/></svg>
<div class="a t" style="left:961.5px;width:30px;text-align:center;top:409px;font-size:5.6px;line-height:10px;color:#303133;">编辑</div>
<svg class="a" style="left:994px;top:405px" width="28" height="15"><rect x="1.5" y="1.5" width="25.300" height="12.500" fill="#ee5a5a" rx="1.3"/></svg>
<div class="a t" style="left:993.2px;width:30px;text-align:center;top:409px;font-size:5.6px;line-height:10px;color:#fff;">删除</div>
<svg class="a" style="left:146px;top:441px" width="10" height="10"><rect x="1.800" y="2.250" width="6.000" height="6.000" fill="#fff" stroke="#d3d7df" stroke-width="0.6" rx="0.900"/></svg>
<div class="a t" style="left:167.0px;width:40px;text-align:center;top:443px;font-size:6.4px;line-height:10px;color:#606266;">1623</div>
<svg class="a" style="left:214px;top:433px;" width="26" height="27"><g transform="translate(1.0 1.8)"><defs><clipPath id="ac7"><rect width="23" height="23" rx="1.3"/></clipPath><filter id="af7" x="-10%" y="-10%" width="120%" height="120%"><feGaussianBlur stdDeviation="0.45"/></filter></defs><g clip-path="url(#ac7)"><g filter="url(#af7)"><rect x="-2" y="-2" width="27" height="27" fill="#c2c6cf"/><circle cx="11.5" cy="11.5" r="11.3" fill="#f4f2f3"/><ellipse cx="11.5" cy="8.8" rx="4.2" ry="5.2" fill="#dbdbdb"/><path d="M1.6 24C1.6 17.4 6 16.8 9.4 15.6V12H13.6V15.6C17 16.8 21.4 17.4 21.4 24Z" fill="#dbdbdb"/><path d="M-2 -2H25V25H-2Z M11.5 0.2A11.3 11.3 0 1 0 11.5 22.8A11.3 11.3 0 1 0 11.5 0.2Z" fill="#c2c6cf" fill-rule="evenodd"/></g></g></g></svg>
<div class="a t" style="left:325.6px;top:443px;font-size:6.4px;line-height:10px;color:#606266;width:41.6px;overflow:hidden;white-space:nowrap;">合肥滨湖职业技</div>
<div class="a t" style="left:438.79999999999995px;width:180px;text-align:center;top:443px;font-size:6.4px;line-height:10px;color:#606266;">手机销售维修，配件出售</div>
<svg class="a" style="left:641px;top:433px" width="53" height="12"><rect x="1.75" y="1.675" width="50.000" height="9.300" fill="#3d8ef7" rx="1.3"/></svg>
<div class="a t" style="left:637.75px;width:60px;text-align:center;top:435px;font-size:5.6px;line-height:10px;color:#fff;">已绑定商户小程序</div>
<svg class="a" style="left:641px;top:446px" width="53" height="13"><rect x="1.75" y="1.725" width="50.000" height="9.300" fill="#ee5353" rx="1.3"/></svg>
<div class="a t" style="left:637.75px;width:60px;text-align:center;top:448px;font-size:5.6px;line-height:10px;color:#fff;">已绑定顾客小程序</div>
<div class="a t" style="left:724.3px;top:443px;font-size:6.4px;line-height:10px;color:#606266;">休息</div>
<svg class="a" style="left:741px;top:441px" width="21" height="12"><rect x="1.3" y="1.1" width="18.600" height="9.300" fill="#3d8ef7" rx="4.7"/></svg>
<svg class="a" style="left:751px;top:442px" width="10" height="10"><rect x="1.5" y="1.0" width="7.500" height="7.500" fill="#fff" rx="4"/></svg>
<div class="a t" style="left:765.2px;top:443px;font-size:6.4px;line-height:10px;color:#409eff;">工作</div>
<div class="a t" style="left:784.8px;width:80px;text-align:center;top:443px;font-size:6.75px;line-height:10px;color:#606266;">2022-11-19 13:39:30</div>
<svg class="a" style="left:963px;top:439px" width="27" height="15"><rect x="2.100" y="1.300" width="22.700" height="11.900" fill="#fff" stroke="#d5d9e0" stroke-width="0.6" rx="1.000"/></svg>
<div class="a t" style="left:961.5px;width:30px;text-align:center;top:442px;font-size:5.6px;line-height:10px;color:#303133;">编辑</div>
<svg class="a" style="left:994px;top:439px" width="28" height="15"><rect x="1.5" y="1.0" width="25.300" height="12.500" fill="#ee5a5a" rx="1.3"/></svg>
<div class="a t" style="left:993.2px;width:30px;text-align:center;top:442px;font-size:5.6px;line-height:10px;color:#fff;">删除</div>
<svg class="a" style="left:146px;top:482px" width="10" height="10"><rect x="1.800" y="2.200" width="6.000" height="6.000" fill="#fff" stroke="#d3d7df" stroke-width="0.6" rx="0.900"/></svg>
<div class="a t" style="left:167.0px;width:40px;text-align:center;top:484px;font-size:6.4px;line-height:10px;color:#606266;">1618</div>
<svg class="a" style="left:214px;top:474px;" width="26" height="27"><g transform="translate(1.0 1.75)"><defs><clipPath id="ac8"><rect width="23" height="23" rx="1.3"/></clipPath><filter id="af8" x="-10%" y="-10%" width="120%" height="120%"><feGaussianBlur stdDeviation="0.45"/></filter></defs><g clip-path="url(#ac8)"><g filter="url(#af8)"><rect x="-2" y="-2" width="27" height="27" fill="#b98440"/><rect x="-2" y="-2" width="27" height="5.4" fill="#4c566c"/><rect x="2" y="0.4" width="17" height="1.6" fill="#8a94b0"/><rect x="-2" y="3.4" width="27" height="1.6" fill="#cfa96c"/><rect x="-2" y="5" width="27" height="3.6" fill="#2c3a36"/><rect x="9" y="5.6" width="3" height="1.6" fill="#e6eef6"/><rect x="-2" y="8.6" width="20" height="6" fill="#b0a48c"/><rect x="2" y="9.6" width="8" height="3" fill="#d4d0c4"/><rect x="10.4" y="9.6" width="5" height="3" fill="#7ec0c8"/><rect x="-2" y="12.6" width="9" height="2.4" fill="#7c7466"/><rect x="-2" y="14.8" width="20" height="3.6" fill="#a86a28"/><rect x="9" y="13.4" width="7" height="1.6" fill="#e2d2a4"/><rect x="12.6" y="14.6" width="0.9" height="3" fill="#e8e4dc"/><rect x="-2" y="18.2" width="27" height="2.6" fill="#d3b07a"/><rect x="-2" y="20.6" width="27" height="1.2" fill="#e4ceac"/><rect x="-2" y="21.8" width="27" height="3.2" fill="#9c6a30"/><rect x="17.8" y="9" width="6" height="12.4" fill="#222848"/><rect x="18.8" y="12" width="2.6" height="5.6" fill="#7a86bc"/><rect x="19.2" y="13" width="1" height="2" fill="#e6ecff"/></g></g></g></svg>
<div class="a t" style="left:240.3px;top:484px;font-size:6.6px;line-height:10px;color:#606266;">一点点狮山大学城店</div>
<div class="a t" style="left:244.0px;width:200px;text-align:center;top:484px;font-size:6.4px;line-height:10px;color:#606266;">狮山大学城</div>
<div class="a t" style="left:438.79999999999995px;width:180px;text-align:center;top:484px;font-size:6.4px;line-height:10px;color:#606266;">一点点</div>
<svg class="a" style="left:647px;top:467px" width="42" height="12"><rect x="1.375" y="1.4" width="38.750" height="9.300" fill="#5fc26b" rx="1.3"/></svg>
<div class="a t" style="left:637.75px;width:60px;text-align:center;top:469px;font-size:5.6px;line-height:10px;color:#fff;">已绑定公众号</div>
<svg class="a" style="left:641px;top:480px" width="53" height="12"><rect x="1.75" y="1.45" width="50.000" height="9.300" fill="#3d8ef7" rx="1.3"/></svg>
<div class="a t" style="left:637.75px;width:60px;text-align:center;top:482px;font-size:5.6px;line-height:10px;color:#fff;">已绑定商户小程序</div>
<svg class="a" style="left:641px;top:493px" width="53" height="12"><rect x="1.75" y="1.5" width="50.000" height="9.300" fill="#ee5353" rx="1.3"/></svg>
<div class="a t" style="left:637.75px;width:60px;text-align:center;top:495px;font-size:5.6px;line-height:10px;color:#fff;">已绑定顾客小程序</div>
<div class="a t" style="left:724.3px;top:484px;font-size:6.4px;line-height:10px;color:#409eff;">休息</div>
<svg class="a" style="left:741px;top:482px" width="21" height="12"><rect x="1.3" y="1.05" width="18.600" height="9.300" fill="#dcdfe6" rx="4.7"/></svg>
<svg class="a" style="left:742px;top:482px" width="10" height="11"><rect x="1.2" y="1.95" width="7.500" height="7.500" fill="#fff" rx="4"/></svg>
<div class="a t" style="left:765.2px;top:484px;font-size:6.4px;line-height:10px;color:#606266;">工作</div>
<div class="a t" style="left:784.8px;width:80px;text-align:center;top:484px;font-size:6.75px;line-height:10px;color:#606266;">2022-11-18 14:15:24</div>
<svg class="a" style="left:963px;top:479px" width="27" height="16"><rect x="2.100" y="2.250" width="22.700" height="11.900" fill="#fff" stroke="#d5d9e0" stroke-width="0.6" rx="1.000"/></svg>
<div class="a t" style="left:961.5px;width:30px;text-align:center;top:483px;font-size:5.6px;line-height:10px;color:#303133;">编辑</div>
<svg class="a" style="left:994px;top:479px" width="28" height="16"><rect x="1.5" y="1.95" width="25.300" height="12.500" fill="#ee5a5a" rx="1.3"/></svg>
<div class="a t" style="left:993.2px;width:30px;text-align:center;top:483px;font-size:5.6px;line-height:10px;color:#fff;">删除</div>
<svg class="a" style="left:146px;top:529px" width="10" height="9"><rect x="1.800" y="1.550" width="6.000" height="6.000" fill="#fff" stroke="#d3d7df" stroke-width="0.6" rx="0.900"/></svg>
<div class="a t" style="left:167.0px;width:40px;text-align:center;top:530px;font-size:6.4px;line-height:10px;color:#606266;">1617</div>
<svg class="a" style="left:647px;top:514px" width="42" height="12"><rect x="1.375" y="1.5" width="38.750" height="9.300" fill="#5fc26b" rx="1.3"/></svg>
<div class="a t" style="left:637.75px;width:60px;text-align:center;top:516px;font-size:5.6px;line-height:10px;color:#fff;">已绑定公众号</div>
<svg class="a" style="left:641px;top:527px" width="53" height="12"><rect x="1.75" y="1.55" width="50.000" height="9.300" fill="#3d8ef7" rx="1.3"/></svg>
<div class="a t" style="left:637.75px;width:60px;text-align:center;top:529px;font-size:5.6px;line-height:10px;color:#fff;">已绑定商户小程序</div>
<svg class="a" style="left:641px;top:540px" width="53" height="12"><rect x="1.75" y="1.6" width="50.000" height="9.300" fill="#ee5353" rx="1.3"/></svg>
<div class="a t" style="left:637.75px;width:60px;text-align:center;top:542px;font-size:5.6px;line-height:10px;color:#fff;">已绑定顾客小程序</div>
<div class="a t" style="left:724.3px;top:530px;font-size:6.4px;line-height:10px;color:#606266;">休息</div>
<svg class="a" style="left:741px;top:528px" width="21" height="12"><rect x="1.3" y="1.4" width="18.600" height="9.300" fill="#3d8ef7" rx="4.7"/></svg>
<svg class="a" style="left:751px;top:529px" width="10" height="10"><rect x="1.5" y="1.3" width="7.500" height="7.500" fill="#fff" rx="4"/></svg>
<div class="a t" style="left:765.2px;top:530px;font-size:6.4px;line-height:10px;color:#409eff;">工作</div>
<svg class="a" style="left:963px;top:526px" width="27" height="15"><rect x="2.100" y="1.600" width="22.700" height="11.900" fill="#fff" stroke="#d5d9e0" stroke-width="0.6" rx="1.000"/></svg>
<div class="a t" style="left:961.5px;width:30px;text-align:center;top:530px;font-size:5.6px;line-height:10px;color:#303133;">编辑</div>
<svg class="a" style="left:994px;top:526px" width="28" height="15"><rect x="1.5" y="1.3" width="25.300" height="12.500" fill="#ee5a5a" rx="1.3"/></svg>
<div class="a t" style="left:993.2px;width:30px;text-align:center;top:530px;font-size:5.6px;line-height:10px;color:#fff;">删除</div>
<svg class="a" style="left:399px;top:216px;" width="7" height="7"><g transform="translate(1.6 1.7)"><path d="M0 0H3.4L1.7 3Z" fill="#9da0a6"/></g></svg>
<div class="a" style="left:28.5px;top:0px;width:93px;height:518px;background:#fff;border-right:1px solid #f2f2f2;box-sizing:border-box;"></div>
<div class="a t" style="left:30.400000000000006px;width:90px;text-align:center;top:4px;font-size:9px;line-height:14px;color:#4a4f5c;">校米粒闪送–1</div>
<svg class="a" style="left:32px;top:22px" width="86" height="4"><rect x="1" y="1.7" width="84.000" height="0.700" fill="#f0f1f5"/></svg>
<svg class="a" style="left:65px;top:19px" width="20" height="10"><rect x="1" y="1" width="18.000" height="8.000" fill="#fff"/></svg>
<div class="a t" style="left:60.0px;width:30px;text-align:center;top:20px;font-size:6.1px;line-height:10px;color:#454b62;">店员</div>
<svg class="a" style="left:41px;top:41px;" width="11" height="10"><g transform="translate(1.6 1.3) scale(0.9429 0.9429)"><g stroke="#3a3d48" stroke-width="0.8" fill="none"><circle cx="3.5" cy="3.5" r="3"/><circle cx="3.5" cy="2.8" r="1"/><path d="M1.6 5.6C2 4.4 5 4.4 5.4 5.6"/></g></g></svg>
<div class="a t" style="left:52px;top:42px;font-size:6.2px;line-height:10px;color:#5c6279;">账户</div>
<svg class="a" style="left:101px;top:42px;" width="9" height="7"><g transform="translate(1.4 1.6)"><path d="M0.6 2.8L2.7 0.7L4.8 2.8" stroke="#6a6e7a" stroke-width="0.7" fill="none"/></g></svg>
<svg class="a" style="left:36px;top:56px" width="82" height="25"><rect x="1.5" y="1" width="79.500" height="22.500" fill="#ecf5ff"/></svg>
<div class="a t" style="left:51.6px;top:65px;font-size:6.2px;line-height:10px;color:#409eff;">店员列表</div>
<div class="a t" style="left:51.9px;top:88px;font-size:6.2px;line-height:10px;color:#666c84;">店员回收站</div>
<svg class="a" style="left:41px;top:110px;" width="11" height="11"><g transform="translate(1.8 1.8)"><g stroke="#303133" stroke-width="0.8" fill="none"><circle cx="3.3" cy="3.3" r="2.8"/><path d="M4.2 1.8L2.4 3.3L4.2 4.8" stroke-width="0.7"/></g></g></svg>
<div class="a t" style="left:52.4px;top:111px;font-size:6.2px;line-height:10px;color:#5c6279;">入口</div>
<svg class="a" style="left:101px;top:112px;" width="9" height="7"><g transform="translate(1.4 1)"><path d="M0.6 2.8L2.7 0.7L4.8 2.8" stroke="#6a6e7a" stroke-width="0.7" fill="none"/></g></svg>
<div class="a t" style="left:51.9px;top:134px;font-size:6.2px;line-height:10px;color:#666c84;">登录&amp;注册</div>
<svg class="a" style="left:30px;top:50px" width="87" height="34"><rect x="4.550" y="5.050" width="77.200" height="24.200" fill="none" stroke="#e93f23" stroke-width="7.1" rx="8.950"/></svg>
<svg class="a" style="left:-1px;top:-1px" width="31" height="520"><rect x="1" y="1" width="28.500" height="518.000" fill="#282c34"/></svg>
<svg class="a" style="left:5px;top:1px;" width="19" height="20"><g transform="translate(1.25 1.8)"><rect width="15" height="15.3" fill="#fff"/><rect x="1.9" y="5" width="4.6" height="6.2" fill="#f3c546"/><rect x="8.6" y="5" width="4.9" height="6.2" fill="#e9673f"/><path d="M3.8 11.6L6.4 9.6L5.2 6.4L7.6 7.4L10.4 5.2L9 8.6L11.2 11.6Z" fill="#e9e6e2"/><circle cx="9.2" cy="4.4" r="1.1" fill="#2a3350"/><path d="M5.4 11.8L7.4 10.4L9.6 11.8Z" fill="#4a4f5c"/></g></svg>
<svg class="a" style="left:-7px;top:228px" width="39" height="37"><rect x="1" y="1.5" width="36.400" height="33.800" fill="#e93f23" rx="12"/></svg>
<svg class="a" style="left:2px;top:235px" width="23" height="23"><rect x="1.1" y="1.3" width="20.800" height="20.300" fill="#3f95fa" rx="4.6"/></svg>
<svg class="a" style="left:10px;top:30px;" width="10" height="9"><g transform="translate(1.3 1.0)"><g stroke="#fff" stroke-width="0.8" fill="none"><rect x="0.4" y="0.4" width="2" height="2"/><rect x="3.6" y="0.4" width="2" height="2"/><rect x="0.4" y="3.6" width="2" height="2"/><rect x="3.6" y="3.6" width="2" height="2"/></g></g></svg>
<div class="a t" style="left:0.3000000000000007px;width:28px;text-align:center;top:40px;font-size:6.2px;line-height:10px;color:#fff;font-weight:700;">概况</div>
<svg class="a" style="left:10px;top:59px;" width="10" height="10"><g transform="translate(1.1 1.8)"><g stroke="#fff" stroke-width="0.8"><path d="M2 0.6H6.4M2 2.8H6.4M2 5H6.4"/><path d="M0 0.6H1M0 2.8H1M0 5H1"/></g></g></svg>
<div class="a t" style="left:0.3000000000000007px;width:28px;text-align:center;top:69px;font-size:6.2px;line-height:10px;color:#fff;font-weight:700;">订单</div>
<svg class="a" style="left:10px;top:89px;" width="10" height="9"><g transform="translate(1.1 1.4)"><g stroke="#fff" stroke-width="0.8"><path d="M2 0.6H6.4M2 2.8H6.4M2 5H6.4"/><path d="M0 0.6H1M0 2.8H1M0 5H1"/></g></g></svg>
<div class="a t" style="left:0.3000000000000007px;width:28px;text-align:center;top:99px;font-size:6.2px;line-height:10px;color:#fff;font-weight:700;">当面付</div>
<svg class="a" style="left:9px;top:118px;" width="11" height="10"><g transform="translate(1.7 1.8)"><g fill="#fff"><rect x="0" y="3.2" width="2" height="2.8"/><rect x="2.15" y="0" width="2" height="6"/><rect x="4.3" y="1.8" width="2" height="4.2"/></g></g></svg>
<div class="a t" style="left:0.3000000000000007px;width:28px;text-align:center;top:128px;font-size:6.2px;line-height:10px;color:#fff;font-weight:700;">数据</div>
<svg class="a" style="left:9px;top:148px;" width="11" height="10"><g transform="translate(1.9 1.2)"><g stroke="#fff" stroke-width="0.8" fill="none"><path d="M1.2 0.4H5.6L6.4 2.6H0.4Z"/><rect x="0.8" y="2.6" width="5.2" height="3.4"/><path d="M0.8 4H6" /></g></g></svg>
<div class="a t" style="left:0.3000000000000007px;width:28px;text-align:center;top:158px;font-size:6.2px;line-height:10px;color:#fff;font-weight:700;">商户</div>
<svg class="a" style="left:9px;top:177px;" width="11" height="11"><g transform="translate(1.9 1.8)"><path d="M0.9 4V3.2A2.5 2.5 0 0 1 5.9 3.2V4" stroke="#fff" stroke-width="0.9" fill="none"/><rect x="0.2" y="3.4" width="1.6" height="2.8" rx="0.5" fill="#fff"/><rect x="5" y="3.4" width="1.6" height="2.8" rx="0.5" fill="#fff"/></g></svg>
<div class="a t" style="left:0.3000000000000007px;width:28px;text-align:center;top:188px;font-size:6.2px;line-height:10px;color:#fff;font-weight:700;">售后</div>
<svg class="a" style="left:9px;top:207px;" width="11" height="11"><g transform="translate(1.9 1.2)"><g fill="#fff"><circle cx="1.5" cy="5.2" r="1.4"/><circle cx="5.4" cy="5.2" r="1.4"/><rect x="0.2" y="2.8" width="3.6" height="2"/><path d="M3.6 5L5 0.8H6.4V1.7H5.7L4.7 5Z"/><rect x="0.5" y="1.4" width="2.2" height="1"/></g></g></svg>
<div class="a t" style="left:0.3000000000000007px;width:28px;text-align:center;top:217px;font-size:6.2px;line-height:10px;color:#fff;font-weight:700;">配送员</div>
<svg class="a" style="left:9px;top:236px;" width="11" height="11"><g transform="translate(1.8 1.7) scale(1.0000 1.0000)"><g stroke="#fff" stroke-width="0.75" fill="none" stroke-linecap="round"><circle cx="3.2" cy="2.3" r="1.8"/><path d="M0.5 6.5C0.9 5 1.8 4.3 2.6 4.1"/><path d="M3.9 4.1L6.2 6.4"/><path d="M4.6 6.5H6.5"/></g></g></svg>
<div class="a t" style="left:0.3000000000000007px;width:28px;text-align:center;top:247px;font-size:6.2px;line-height:10px;color:#fff;font-weight:700;">店员</div>
<svg class="a" style="left:10px;top:266px;" width="10" height="11"><g transform="translate(1.0 1.5)"><g stroke="#fff" stroke-width="0.8" fill="none"><circle cx="3.3" cy="3.3" r="2.8"/><path d="M2.2 2H4.4M3.3 2V4.6M2.2 4.6H4.4" stroke-width="0.6"/></g></g></svg>
<div class="a t" style="left:0.3000000000000007px;width:28px;text-align:center;top:276px;font-size:6.2px;line-height:10px;color:#fff;font-weight:700;">顾客</div>
<svg class="a" style="left:9px;top:296px;" width="11" height="10"><g transform="translate(1.7 1.4)"><g fill="#fff"><ellipse cx="2.8" cy="2.2" rx="2.8" ry="2.2"/><ellipse cx="4.8" cy="3.8" rx="2.4" ry="1.9" stroke="#282c34" stroke-width="0.4"/><path d="M1.2 3.8L0.8 5L2.2 4.2Z"/></g></g></svg>
<div class="a t" style="left:0.3000000000000007px;width:28px;text-align:center;top:306px;font-size:6.2px;line-height:10px;color:#fff;font-weight:700;">小程序</div>
<svg class="a" style="left:10px;top:326px;" width="10" height="9"><g transform="translate(1.3 1.0)"><g fill="#fff"><rect x="0" y="0" width="2.6" height="2.6" rx="0.6"/><rect x="3.4" y="0" width="2.6" height="2.6" rx="0.6"/><rect x="0" y="3.4" width="2.6" height="2.6" rx="0.6"/><rect x="3.4" y="3.4" width="2.6" height="2.6" rx="0.6"/></g></g></svg>
<div class="a t" style="left:0.3000000000000007px;width:28px;text-align:center;top:336px;font-size:6.2px;line-height:10px;color:#fff;font-weight:700;">应用</div>
<svg class="a" style="left:9px;top:355px;" width="11" height="11"><g transform="translate(1.9 1.0)"><g stroke="#fff" stroke-width="0.8" fill="none" stroke-linecap="round"><circle cx="3.2" cy="2.2" r="1.7"/><path d="M0.5 6.8C1.2 5 2.2 4.2 3.2 4"/></g><circle cx="5" cy="5.4" r="1.3" fill="#fff"/></g></svg>
<div class="a t" style="left:0.3000000000000007px;width:28px;text-align:center;top:365px;font-size:6.2px;line-height:10px;color:#fff;font-weight:700;">设置</div>
<svg class="a" style="left:10px;top:384px;" width="10" height="11"><g transform="translate(1.3 1.8)"><path d="M1.4 3V2A1.6 1.6 0 0 1 4.6 2V3" stroke="#fff" stroke-width="0.9" fill="none"/><rect x="0" y="2.8" width="6" height="4" rx="0.6" fill="#fff"/><circle cx="3" cy="4.7" r="0.6" fill="#282c34"/></g></svg>
<div class="a t" style="left:0.3000000000000007px;width:28px;text-align:center;top:395px;font-size:6.2px;line-height:10px;color:#fff;font-weight:700;">权限</div>
<svg class="a" style="left:10px;top:414px;" width="10" height="11"><g transform="translate(1.5 1.5)"><path d="M0 0.6Q0 0 0.6 0H3.8L5.6 1.8V6Q5.6 6.6 5 6.6H0.6Q0 6.6 0 6Z" fill="#fff"/><path d="M1.2 5L2.6 2.8L4.2 5Z" fill="#282c34" opacity="0.7"/></g></svg>
<div class="a t" style="left:0.3000000000000007px;width:28px;text-align:center;top:424px;font-size:6.2px;line-height:10px;color:#fff;font-weight:700;">坑位</div>
<svg class="a" style="left:10px;top:444px;" width="10" height="10"><g transform="translate(1.3 1.6)"><g fill="#fff"><path d="M0 0.8L2.6 0.4V2.6H0Z"/><path d="M3 0.35L6 0V2.6H3Z"/><path d="M0 3H2.6V5.2L0 4.8Z"/><path d="M3 3H6V5.6L3 5.25Z"/></g></g></svg>
<div class="a t" style="left:0.3000000000000007px;width:28px;text-align:center;top:454px;font-size:6.2px;line-height:10px;color:#fff;font-weight:700;">系统</div>
<svg class="a" style="left:953px;top:198px" width="43" height="308"><rect x="5.150" y="4.850" width="33.200" height="298.400" fill="none" stroke="#e93f23" stroke-width="6.9" rx="8.050"/></svg>
<svg class="a" style="left:0;top:0" width="1024" height="518" viewBox="0 0 1024 518"><polygon points="842.76,140.89 927.51,196.79 935.4,186 954.1,218.1 916,213.1 923.89,202.31 839.14,146.41" fill="#e93f23"/></svg>
</div></body></html>
